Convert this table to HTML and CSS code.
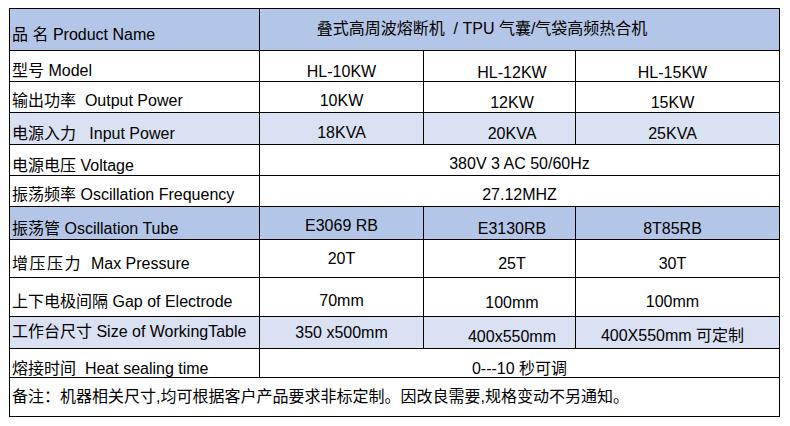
FILE: index.html
```html
<!DOCTYPE html>
<html lang="zh">
<head>
<meta charset="utf-8">
<title>Spec table</title>
<link rel="stylesheet" href="styles.css">
</head>
<body>
<div class="spec">
  <div class="cell label blue t17">品 名 Product Name</div>
  <div class="cell value span3 blue t11 shift-head">叠式高周波熔断机  / TPU 气囊/气袋高频热合机</div>

  <div class="cell label t11">型号 Model</div>
  <div class="cell value t12">HL-10KW</div>
  <div class="cell value mid t13">HL-12KW</div>
  <div class="cell value right t13">HL-15KW</div>

  <div class="cell label t10">输出功率  Output Power</div>
  <div class="cell value t10">10KW</div>
  <div class="cell value mid t12">12KW</div>
  <div class="cell value right t12">15KW</div>

  <div class="cell label light t12">电源入力   Input Power</div>
  <div class="cell value light t11">18KVA</div>
  <div class="cell value mid light t12">20KVA</div>
  <div class="cell value right light t12">25KVA</div>

  <div class="cell label t12">电源电压 Voltage</div>
  <div class="cell value span3 t10">380V 3 AC 50/60Hz</div>

  <div class="cell label t10">振荡频率 Oscillation Frequency</div>
  <div class="cell value span3 t10">27.12MHZ</div>

  <div class="cell label blue t13">振荡管 Oscillation Tube</div>
  <div class="cell value blue t10">E3069 RB</div>
  <div class="cell value mid blue t13">E3130RB</div>
  <div class="cell value right blue t13">8T85RB</div>

  <div class="cell label t15"><span class="wide">增压压力</span>  Max Pressure</div>
  <div class="cell value t10">20T</div>
  <div class="cell value mid t15">25T</div>
  <div class="cell value right t15">30T</div>

  <div class="cell label t15">上下电极间隔 Gap of Electrode</div>
  <div class="cell value t14">70mm</div>
  <div class="cell value mid t16">100mm</div>
  <div class="cell value right t15">100mm</div>

  <div class="cell label light t6">工作台尺寸 Size of WorkingTable</div>
  <div class="cell value light t7">350 x500mm</div>
  <div class="cell value mid light t11">400x550mm</div>
  <div class="cell value right light t10">400X550mm 可定制</div>

  <div class="cell label t11">熔接时间  Heat sealing time</div>
  <div class="cell value span3 t11">0---10 秒可调</div>

  <div class="cell label span4 t10">备注：机器相关尺寸,均可根据客户产品要求非标定制。因改良需要,规格变动不另通知。</div>
</div>
</body>
</html>
```

FILE: styles.css
```css
html, body {
  margin: 0;
  padding: 0;
  background: #ffffff;
}

body {
  font-family: "Liberation Sans", "Noto Sans CJK SC", sans-serif;
  font-size: 16px;
  line-height: 18px;
  color: #000000;
}

.spec {
  margin: 8px 0 0 9px;
  width: 771px;
  box-sizing: border-box;
  border-left: 1px solid #000;
  border-top: 1px solid #000;
  display: grid;
  grid-template-columns: 250px 164px 152px 204px;
  grid-template-rows: 42px 31px 31px 32px 31px 31px 33px 38px 39px 32px 29px 39px;
}

.cell {
  box-sizing: border-box;
  border-right: 1px solid #000;
  border-bottom: 1px solid #000;
  display: flex;
  align-items: flex-start;
  white-space: pre;
  overflow: hidden;
}

.label {
  justify-content: flex-start;
  padding-left: 2px;
}

.value {
  justify-content: center;
}

.value.mid {
  padding-left: 25px;
}

.value.right {
  padding-right: 10px;
}

.shift-head {
  padding-right: 75px;
}

.span3 { grid-column: span 3; }
.span4 { grid-column: span 4; }

.blue { background: #b4c6e7; }
.light { background: #d9e1f2; }

.wide { letter-spacing: 1.5px; }

.t6 { padding-top: 6px; }
.t7 { padding-top: 7px; }
.t10 { padding-top: 10px; }
.t11 { padding-top: 11px; }
.t12 { padding-top: 12px; }
.t13 { padding-top: 13px; }
.t14 { padding-top: 14px; }
.t15 { padding-top: 15px; }
.t16 { padding-top: 16px; }
.t17 { padding-top: 17px; }
```
